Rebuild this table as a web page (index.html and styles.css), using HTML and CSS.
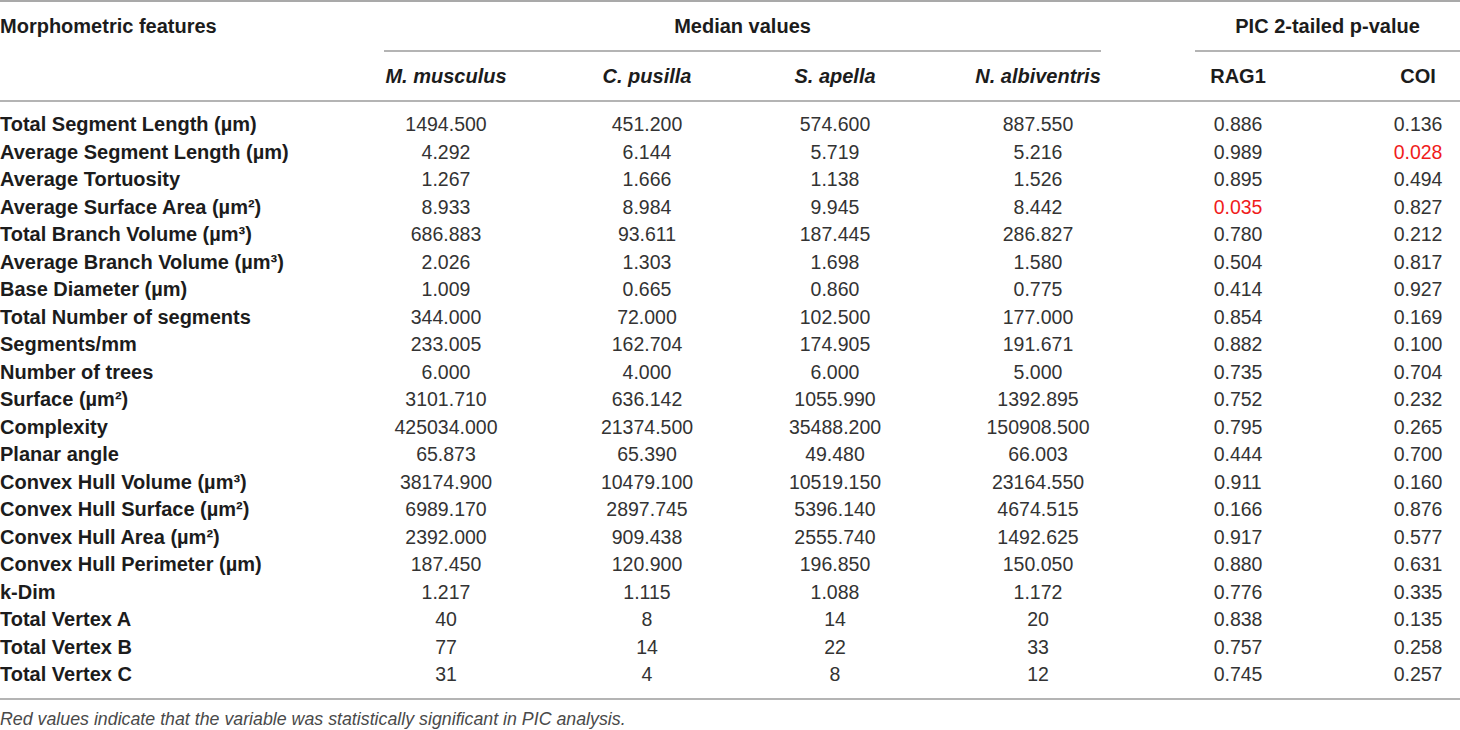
FILE: index.html
```html
<!DOCTYPE html>
<html lang="en">
<head>
<meta charset="utf-8">
<title>Morphometric features</title>
<link rel="stylesheet" href="styles.css">
</head>
<body>
<table class="data">
  <colgroup>
    <col class="c1"><col class="c2"><col class="c3"><col class="c4"><col class="c5"><col class="c6"><col class="c7">
  </colgroup>
  <thead>
    <tr class="hr1">
      <th class="feat"><div class="hcell">Morphometric features</div></th>
      <th colspan="4"><div class="hcell span-med">Median values</div></th>
      <th colspan="2"><div class="hcell span-pic">PIC 2-tailed p-value</div></th>
    </tr>
    <tr class="hr2">
      <th></th>
      <th><i>M. musculus</i></th>
      <th><i>C. pusilla</i></th>
      <th><i>S. apella</i></th>
      <th><i>N. albiventris</i></th>
      <th>RAG1</th>
      <th class="h-coi">COI</th>
    </tr>
  </thead>
  <tbody>
    <tr><th>Total Segment Length (µm)</th><td>1494.500</td><td>451.200</td><td>574.600</td><td>887.550</td><td>0.886</td><td class="v-coi">0.136</td></tr>
    <tr><th>Average Segment Length (µm)</th><td>4.292</td><td>6.144</td><td>5.719</td><td>5.216</td><td>0.989</td><td class="v-coi sig">0.028</td></tr>
    <tr><th>Average Tortuosity</th><td>1.267</td><td>1.666</td><td>1.138</td><td>1.526</td><td>0.895</td><td class="v-coi">0.494</td></tr>
    <tr><th>Average Surface Area (µm²)</th><td>8.933</td><td>8.984</td><td>9.945</td><td>8.442</td><td class="sig">0.035</td><td class="v-coi">0.827</td></tr>
    <tr><th>Total Branch Volume (µm³)</th><td>686.883</td><td>93.611</td><td>187.445</td><td>286.827</td><td>0.780</td><td class="v-coi">0.212</td></tr>
    <tr><th>Average Branch Volume (µm³)</th><td>2.026</td><td>1.303</td><td>1.698</td><td>1.580</td><td>0.504</td><td class="v-coi">0.817</td></tr>
    <tr><th>Base Diameter (µm)</th><td>1.009</td><td>0.665</td><td>0.860</td><td>0.775</td><td>0.414</td><td class="v-coi">0.927</td></tr>
    <tr><th>Total Number of segments</th><td>344.000</td><td>72.000</td><td>102.500</td><td>177.000</td><td>0.854</td><td class="v-coi">0.169</td></tr>
    <tr><th>Segments/mm</th><td>233.005</td><td>162.704</td><td>174.905</td><td>191.671</td><td>0.882</td><td class="v-coi">0.100</td></tr>
    <tr><th>Number of trees</th><td>6.000</td><td>4.000</td><td>6.000</td><td>5.000</td><td>0.735</td><td class="v-coi">0.704</td></tr>
    <tr><th>Surface (µm²)</th><td>3101.710</td><td>636.142</td><td>1055.990</td><td>1392.895</td><td>0.752</td><td class="v-coi">0.232</td></tr>
    <tr><th>Complexity</th><td>425034.000</td><td>21374.500</td><td>35488.200</td><td>150908.500</td><td>0.795</td><td class="v-coi">0.265</td></tr>
    <tr><th>Planar angle</th><td>65.873</td><td>65.390</td><td>49.480</td><td>66.003</td><td>0.444</td><td class="v-coi">0.700</td></tr>
    <tr><th>Convex Hull Volume (µm³)</th><td>38174.900</td><td>10479.100</td><td>10519.150</td><td>23164.550</td><td>0.911</td><td class="v-coi">0.160</td></tr>
    <tr><th>Convex Hull Surface (µm²)</th><td>6989.170</td><td>2897.745</td><td>5396.140</td><td>4674.515</td><td>0.166</td><td class="v-coi">0.876</td></tr>
    <tr><th>Convex Hull Area (µm²)</th><td>2392.000</td><td>909.438</td><td>2555.740</td><td>1492.625</td><td>0.917</td><td class="v-coi">0.577</td></tr>
    <tr><th>Convex Hull Perimeter (µm)</th><td>187.450</td><td>120.900</td><td>196.850</td><td>150.050</td><td>0.880</td><td class="v-coi">0.631</td></tr>
    <tr><th>k-Dim</th><td>1.217</td><td>1.115</td><td>1.088</td><td>1.172</td><td>0.776</td><td class="v-coi">0.335</td></tr>
    <tr><th>Total Vertex A</th><td>40</td><td>8</td><td>14</td><td>20</td><td>0.838</td><td class="v-coi">0.135</td></tr>
    <tr><th>Total Vertex B</th><td>77</td><td>14</td><td>22</td><td>33</td><td>0.757</td><td class="v-coi">0.258</td></tr>
    <tr><th>Total Vertex C</th><td>31</td><td>4</td><td>8</td><td>12</td><td>0.745</td><td class="v-coi">0.257</td></tr>
  </tbody>
</table>
<p class="note">Red values indicate that the variable was statistically significant in PIC analysis.</p>
</body>
</html>
```

FILE: styles.css
```css
html, body {
  margin: 0;
  padding: 0;
  background: #ffffff;
}

body {
  font-family: "Liberation Sans", Arial, Helvetica, sans-serif;
  color: #2b2b2b;
  width: 1460px;
}

.data {
  width: 1460px;
  border-collapse: collapse;
  table-layout: fixed;
  border-top: 2px solid #a9a9a9;
  border-bottom: 2px solid #b4b4b4;
  font-size: 19.5px;
}

.c1 { width: 356px; }
.c2 { width: 180px; }
.c3 { width: 222px; }
.c4 { width: 154px; }
.c5 { width: 252px; }
.c6 { width: 148px; }
.c7 { width: 148px; }

.data th,
.data td {
  padding: 0;
  text-align: center;
  white-space: nowrap;
}

.data th {
  font-weight: bold;
  font-size: 20px;
  color: #1c1c1c;
}

.hr1 th {
  vertical-align: top;
}

.hcell {
  height: 48px;
  line-height: 48px;
}

.hr1 .feat .hcell {
  text-align: left;
}

.span-med {
  margin-left: 28px;
  margin-right: 63px;
  border-bottom: 2px solid #b4b4b4;
}

.span-pic {
  margin-left: 31px;
  border-bottom: 2px solid #b4b4b4;
}

.hr2 th {
  height: 48px;
  line-height: 48px;
  border-bottom: 2px solid #b4b4b4;
}

.hr2 .h-coi {
  padding-left: 64px;
}

.data tbody th {
  text-align: left;
  font-weight: bold;
}

.data tbody th,
.data tbody td {
  height: 27.5px;
  line-height: 27.5px;
}

.data tbody td {
  color: #333333;
}

.data tbody tr:first-child th,
.data tbody tr:first-child td {
  padding-top: 9px;
}

.data tbody tr:last-child th,
.data tbody tr:last-child td {
  padding-bottom: 9px;
}

.data tbody td.v-coi {
  padding-left: 64px;
}

.data tbody td.sig {
  color: #f01c1c;
}

.note {
  margin: 9px 0 0 0;
  font-size: 17.8px;
  line-height: 20px;
  font-style: italic;
  color: #4a4a4a;
}
```
